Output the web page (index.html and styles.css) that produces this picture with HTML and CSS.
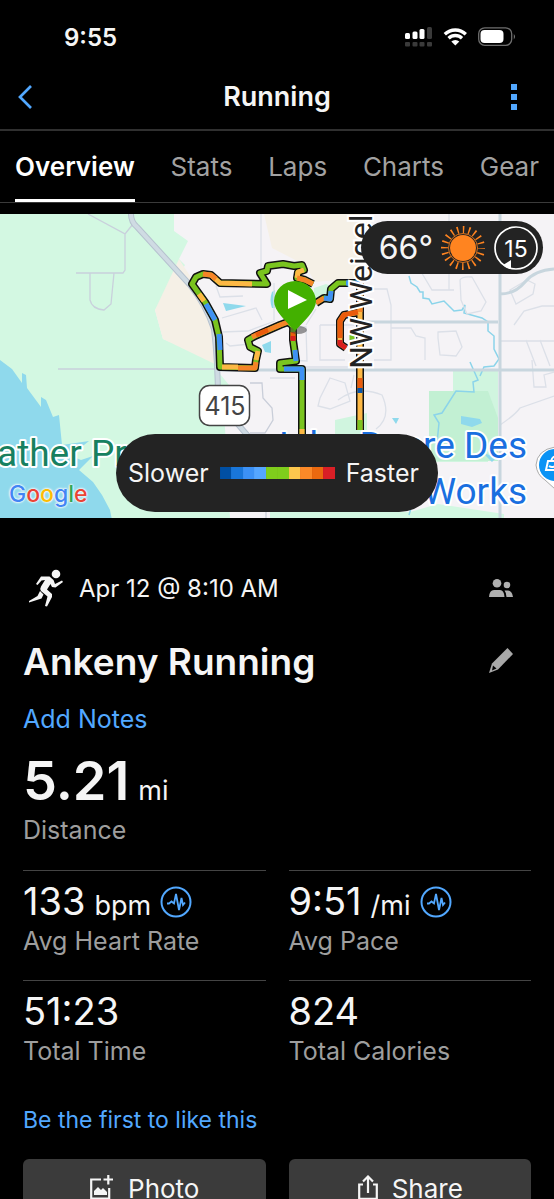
FILE: index.html
```html
<!DOCTYPE html>
<html lang="en">
<head>
  <meta charset="UTF-8">
  <title>Running | Activity</title>
  <meta name="viewport" content="width=device-width, initial-scale=1">
  <link rel="stylesheet" href="styles.css">
</head>
<body>
  <!-- Status bar -->
  <div class="status">
    <span class="time">9:55</span>
    <svg class="status-icons" width="114" height="22" viewBox="404 26 114 22">
      <g fill="#fff">
        <rect x="405" y="33" width="5" height="6" rx="1.5"/>
        <rect x="412.500" y="31.500" width="5" height="7.500" rx="1.500"/>
        <rect x="419.500" y="29" width="5" height="10" rx="1.5"/>
      </g>
      <g fill="#3a3a3a">
        <rect x="427" y="27" width="5" height="12" rx="1.5"/>
        <rect x="405" y="42" width="5" height="4.500" rx="1"/>
        <rect x="412.500" y="42" width="5" height="4.500" rx="1"/>
        <rect x="419.500" y="42" width="5" height="4.500" rx="1"/>
        <rect x="427" y="42" width="5" height="4.500" rx="1"/>
      </g>
      <g fill="none" stroke="#fff" stroke-width="3.300">
        <path d="M444.800 34.300a15 15 0 0 1 21 0"/>
        <path d="M448.600 38.200a9.600 9.600 0 0 1 13.400 0"/>
      </g>
      <path fill="#fff" d="M451.300 41.500a5.800 5.800 0 0 1 8 0l-4 4z"/>
      <rect x="478.700" y="27.800" width="33" height="17.500" rx="6" fill="none" stroke="#6e6e6e" stroke-width="1.300"/>
      <rect x="480.500" y="30" width="23" height="13" rx="4" fill="#fff"/>
      <path fill="#777" d="M513.800 34q2.400 2.500 0 5.500z"/>
    </svg>
  </div>

  <header class="nav">
    <button type="button" class="icon-btn" aria-label="Back">
      <svg width="16" height="26" viewBox="0 0 16 26"><path d="M14 2L3 13l11 11" fill="none" stroke="#52a8ff" stroke-width="2.700"/></svg>
    </button>
    <h1>Running</h1>
    <button type="button" class="icon-btn" aria-label="More">
      <svg width="6" height="26" viewBox="0 0 6 26" fill="#52a8ff"><path d="M0 0h6v6H0zM0 10h6v6H0zM0 20h6v6H0z"/></svg>
    </button>
  </header>

  <nav class="tabs">
    <a href="#overview" class="active">Overview</a>
    <a href="#stats">Stats</a>
    <a href="#laps">Laps</a>
    <a href="#charts">Charts</a>
    <a href="#gear">Gear</a>
  </nav>

  <main>
    <section class="map">
      <svg class="map-canvas" viewBox="0 214 554 304" preserveAspectRatio="xMidYMid slice">
        <defs>
          <path id="loop" d="M313 284L305 280 297 278 298 272 304 270 302 265 294 266 283 264 268 266 267 271 260 273 267 284 220 283 211 275 203 274 196 277 192 284 205 302 215 320 219 337 220 367 255 368 256 360 258 351 250 347 248 340 255 336 280 325 288 322 293 326 293 340 296 361 280 363 280 369 302 369 302 436"/>
          <path id="east" d="M316 303L324 298 330 299 331 289 338 283 360 283"/>
          <path id="weigel" d="M360 283V430M360 312L344 315 340 321 340 344 346 348"/>
        </defs>
        <rect y="214" width="554" height="304" fill="#f5f3f6"/>
        <!-- land -->
        <path fill="#d3f8e2" d="M0 214H174V231l14 10-9 18 6 6-30 45 8 29 57 23v12l18 22 15 11 24 1 10 22v88H0z"/>
        <path fill="#f5f0e6" d="M179 259l13 20 23 40 6 48-58-28-8-29z"/>
        <path fill="#f5f0e6" d="M264 214h96v64l-45 4-10-17-33-17z"/>
        <path fill="#f5f3f6" d="M222 392l28-16h50v142h-70l-5-90z"/>
        <path fill="#d0f5df" d="M453 370h45v50h-10v42h-59v-71h24zM335 420l32-7v29h-32z"/>
        <path fill="#c2f0d3" d="M429 391h59l10 27v43h-69z"/>
        <path fill="#d3f8e2" d="M270 512l60-3 80 3 28-8 66 10v4H270z"/>
        <path fill="#d0f5df" d="M314 288l12-4 10 4-4 14-18 2z"/>
        <!-- water -->
        <path fill="#8fd9ec" d="M0 360l12 9 10 14 0-10 4 2 1 13 14 19v-10l5 3 7 17 6-2 3 30 27-4-10 8-10 6 12 5 12-4-14 14 14 12 9 13 8 15 2 10H0zM223 303l23 3-20 5zM262 345l9-4v12l-6-1z"/>
        <path fill="#8fd9ec" d="M461 416l19 3 2 4-10 4-11-3zM392 418h7l-3 6zM482 452l14 6-4 4zM272 292q-3 8 0 16h3v-18z"/>
        <path fill="none" stroke="#8bd4ea" stroke-width="1.500" d="M409 276l2 7 6 4 3 5 3 0 0 6 6 1 3 5 12-3 10 10 8-1 3-5-1 8 18 5 6 4v9l6 5 0 13 5 10-5 7-10 1-4 9M470 362l8 18-5 2 1 10-18-1-14 22-8 2 5 8-2 20M412 505l-3 10"/>
        <!-- streets -->
        <g fill="none" stroke="#dce0e8" stroke-width="1.300">
          <path stroke="#c9d0dc" d="M88 214l37 20v36l-2 3H76M90 273v27q2 9 14 10l7-6 3-31M125 234l8-10M58 369h160"/>
          <path d="M261 214v69M216 286l4 11 23-1M222 318l34-10 6 12M222 332l26-1 27-10M226 343l4 3 20-2M274 283v37M300 327h6l1 34-20-1M320 325v35h25M320 325h34M306 325l10-16M354 322h140M354 367h-54M373 289h14l4 16v55h-17M391 328h20l5 8 9 2v22M438 332l18-1 6 16-6 9-16-1-2-17zM460 280q2-4 12-3l14 25-5 9-14 3-6-14zM420 270l12 20h22M449 214v76M510 290l17-10 8 4-2 10-17 10zM514 325l10-14 18-5h12M500 341h54M526 340l10 26M540 340l10 26M532 360l2 27h12l-2-12 10-3M500 425q15-10 20-17l34-12M270 378h25M354 375l-3 13M330 378l15 5 5 18-20 8-12-3 2-8zM338 400q20-15 44-5 10 22-6 34"/>
          <path stroke="#c9ced9" d="M250 383h12l1 15 9 10 1 12-8 13h-15M266 434v84"/>
        </g>
        <path fill="none" stroke="#c8d6de" stroke-width="3" d="M220 370h334M354 322h144M500 214v304M500 294q15 0 25-12 10-12 29-13"/>
        <path fill="none" stroke="#b6c2cf" stroke-width="6" d="M131 214q0 8 6 13l53 58q16 20 24 44 4 34 4 72l30 35"/>
        <path fill="none" stroke="#cfdbe3" stroke-width="4" d="M131 214q0 8 6 13l53 58q16 20 24 44 4 34 4 72l30 35"/>

        <!-- place labels -->
        <g class="place">
          <text class="park" x="-3" y="466">ather Pr</text>
          <text x="527" y="458" text-anchor="end">John Deere Des</text>
          <text x="527" y="504" text-anchor="end">Works</text>
        </g>

        <!-- route: dark casing, then speed colours -->
        <g class="casing">
          <use href="#loop"/>
          <use href="#east"/>
          <use href="#weigel"/>
        </g>
        <g class="track">
          <use href="#loop" stroke="#7ac41f"/>
          <use href="#east" stroke="#7ac41f"/>
          <use href="#weigel" stroke="#fdb844"/>
          <path stroke="#fdb844" d="M252 284L220 283 211 275M304 270L298 272 297 278M199 294L204 301M222 367H238M256 360L258 351M302 429V436"/>
          <path stroke="#f58427" d="M203 274L211 275 216 279M238 368H255L256 362M252 337L280 325 288 322M316 303L324 298M297 278L305 280 313 284M360 295V312"/>
          <path stroke="#3f91f4" d="M206 304L215 320M219 334L220 350M295 350L296 361M284 369H302V380M324 298L330 299 331 291M346 283H360"/>
          <path stroke="#ea5b0c" d="M358 312L344 315 340 321V338M293 332V340M256 335L268 330M360 378V388"/>
          <path stroke="#d91e1e" d="M293 336V341M340 340V344L346 348"/>
          <path stroke="#0b55a8" d="M360 388V393"/>
          <path stroke="#7ac41f" d="M352 333V345M360 420V430"/>
        </g>

        <text class="road" transform="translate(372 369) rotate(-90)">NW Weigel</text>

        <ellipse cx="298" cy="330" rx="9" ry="4" fill="#333" opacity=".5"/>
        <path fill="#43b000" d="M295 281a21 21 0 0 1 21 20c0 10-12 20-21 30-9-10-21-20-21-30a21 21 0 0 1 21-20z"/>
        <path fill="#fff" d="M288 290l19 10-19 9z"/>

        <rect x="199.500" y="385.500" width="50" height="40" rx="10" fill="#fff" stroke="#444" stroke-width="1.500"/>
        <text class="shield" x="225" y="415" text-anchor="middle">415</text>

        <!-- store pin at the edge -->
        <path fill="#fff" stroke="#aaa" d="M555 447q-18 3-19 18 1 10 9 15l10 9z"/>
        <circle cx="555" cy="465" r="16" fill="#0a93f5"/>
        <path fill="none" stroke="#fff" stroke-width="2" d="M548 461h10v9h-12zM551 461q2-6 6-4M549 466q3 2 6 0"/>
      </svg>

      <div class="google"><span class="g-blue">G</span><span class="g-red">o</span><span class="g-yellow">o</span><span class="g-blue">g</span><span class="g-green">l</span><span class="g-red">e</span></div>

      <div class="weather">
        <span>66°</span>
        <svg width="46" height="46" viewBox="-23 -23 46 46">
          <circle r="13" fill="#ff8420"/>
          <circle r="14.500" fill="none" stroke="#ff8420" stroke-width=".8"/>
          <circle r="18.500" fill="none" stroke="#ff8420" stroke-width="7" stroke-dasharray="1.500 4.312" stroke-dashoffset=".75"/>
        </svg>
        <svg width="46" height="46" viewBox="-23 -23 46 46">
          <circle r="21" fill="none" stroke="#fff" stroke-width="1.700"/>
          <path fill="#fff" d="M-5 12l-8 5q4 4 8 4z"/>
          <text class="wind" y="9" text-anchor="middle">15</text>
        </svg>
      </div>

      <div class="legend">
        <span>Slower</span>
        <div class="scale">
          <i class="s1"></i><i class="s2"></i><i class="s3"></i><i class="s4"></i><i class="s5"></i><i class="s5"></i><i class="s6"></i><i class="s7"></i><i class="s8"></i><i class="s9"></i>
        </div>
        <span>Faster</span>
      </div>
    </section>

    <section class="details">
      <div class="row date-row">
        <svg width="36" height="38" viewBox="0 0 36 38">
          <circle cx="28" cy="5" r="4.300" fill="#f5f5f5"/>
          <path fill="#f5f5f5" d="M13 7.500h8.500l4 3.500 1.500 4 7-3.500 1 1.500-7.500 5.500-3.500-.5-1.500-3-3.500 5.500 5 4.500v3l-5 9.500-2-.5 2.500-9.500-6.500-5.500q-1.500-2 0-4.500l4-6.500-3.500.5-4 4.500-1.500-1z"/>
          <path fill="#f5f5f5" d="M12 22l3.500 3.500-2 4L1 33.500l0-1.500 8.500-5z"/>
        </svg>
        <span class="date">Apr 12 @ 8:10 AM</span>
        <button type="button" class="icon-btn push" aria-label="Privacy">
          <svg width="24" height="18" viewBox="0 0 24 18" fill="#b0b0b0"><circle cx="8" cy="4.300" r="4.300"/><circle cx="18" cy="6" r="3.300"/><path d="M0 18q.5-7 5-7h6q4 0 4.500 7zM15.500 11.500h3.500q4 0 5 6.500h-6.500q0-4-2-6.500z"/></svg>
        </button>
      </div>

      <div class="row title-row">
        <h2>Ankeny Running</h2>
        <button type="button" class="icon-btn push" aria-label="Edit name">
          <svg width="24" height="26" viewBox="0 0 24 26"><path fill="#a8a8a8" d="M18.500 0L24 6 9 21.500 0 25l3-9.500z"/><path fill="#000" d="M4 17.500l3.500 3-4.500 2z"/></svg>
        </button>
      </div>

      <a href="#notes" class="notes">Add Notes</a>

      <div class="stat total">
        <div class="value">5.21 <small>mi</small></div>
        <div class="label">Distance</div>
      </div>

      <div class="stats">
        <div class="stat">
          <div class="value">133 <small>bpm</small>
            <svg width="32" height="32" viewBox="0 0 32 32" fill="none" stroke="#52a8ff"><circle cx="16" cy="16" r="14.500" stroke-width="2"/><path stroke-width="1.800" d="M7 17.500h2l2.500-2 2.500 2L16 8l3 16 2.500-12 1.500 7 2-2.500"/></svg>
          </div>
          <div class="label">Avg Heart Rate</div>
        </div>
        <div class="stat">
          <div class="value">9:51 <small>/mi</small>
            <svg width="32" height="32" viewBox="0 0 32 32" fill="none" stroke="#52a8ff"><circle cx="16" cy="16" r="14.500" stroke-width="2"/><path stroke-width="1.800" d="M7 17.500h2l2.500-2 2.500 2L16 8l3 16 2.500-12 1.500 7 2-2.500"/></svg>
          </div>
          <div class="label">Avg Pace</div>
        </div>
        <div class="stat">
          <div class="value">51:23</div>
          <div class="label">Total Time</div>
        </div>
        <div class="stat">
          <div class="value">824</div>
          <div class="label">Total Calories</div>
        </div>
      </div>

      <a href="#like" class="like">Be the first to like this</a>

      <div class="actions">
        <button type="button">
          <svg width="26" height="26" viewBox="0 0 26 26" fill="none" stroke="#f5f5f5" stroke-width="2.200"><path d="M12 4.500H2.200v19h18V13M14.500 4.500h9.500M19.300 0v9.500"/><path fill="#f5f5f5" stroke="none" d="M5 20v-4l4-4 3 3 2-2 4 4v3z"/></svg>
          Photo
        </button>
        <button type="button">
          <svg width="22" height="26" viewBox="0 0 22 26" fill="none" stroke="#f5f5f5" stroke-width="2.200"><path d="M6 9.500H2.200v14.300h17.600V9.500H16M11 18V2M6 6.500l5-5 5 5"/></svg>
          Share
        </button>
      </div>
    </section>
  </main>
</body>
</html>
```

FILE: styles.css
```css
* {
  box-sizing: border-box;
}
body {
  margin: 0;
  height: 100vh;
  overflow: hidden;
  display: flex;
  flex-direction: column;
  background: #000;
  color: #f5f5f5;
  font-family: Inter, Roboto, sans-serif;
}
a {
  color: #52a8ff;
  text-decoration: none;
}
button {
  border: none;
  color: inherit;
  font-family: inherit;
  cursor: pointer;
}
svg {
  display: block;
  flex: none;
}
.status {
  flex: none;
  height: 64px;
  padding: 10px 36px 0 64px;
  display: flex;
  align-items: center;
  justify-content: space-between;
}
.time {
  font-size: 24px;
  font-weight: 600;
}
.nav {
  flex: none;
  height: 67px;
  padding: 0 37px 0 17px;
  display: grid;
  grid-template-columns: 16px 1fr 6px;
  align-items: center;
  border-bottom: 2px solid #303030;
}
.nav h1 {
  margin: 0;
  padding-left: 10px;
  text-align: center;
  font-size: 27px;
  font-weight: 600;
}
.icon-btn {
  background: none;
  padding: 0;
}
.tabs {
  flex: none;
  height: 72px;
  padding: 0 15px;
  display: flex;
  justify-content: space-between;
  border-bottom: 1px solid #3a3a3a;
}
.tabs a {
  color: #a2a2a2;
  font-size: 26px;
  line-height: 71px;
}
.tabs .active {
  color: #fff;
  font-weight: 600;
  border-bottom: 3px solid #fff;
}
main {
  flex: 1;
  min-height: 0;
  overflow-y: auto;
  scrollbar-width: none;
  padding-top: 11px;
}

/* Map */
.map {
  position: relative;
  height: 304px;
  overflow: hidden;
}
.map-canvas {
  width: 100%;
  height: 100%;
}
.place {
  font-family: Roboto, sans-serif;
  font-size: 37px;
  fill: #1a6fe0;
  stroke: #fff;
  stroke-width: 4px;
  paint-order: stroke;
  stroke-linejoin: round;
}
.park {
  fill: #178060;
}
.casing, .track {
  fill: none;
  stroke-linejoin: round;
}
.casing {
  stroke: #111;
  stroke-width: 8px;
}
.track {
  stroke-width: 5px;
}
.road {
  font-family: Roboto, sans-serif;
  font-size: 32px;
  fill: #222;
  stroke: #fff;
  stroke-width: 4px;
  paint-order: stroke;
}
.shield {
  font-size: 25px;
  fill: #444;
}
.google {
  position: absolute;
  left: 9px;
  bottom: 8px;
  font-size: 23px;
  line-height: 32px;
  font-weight: 500;
  text-shadow: 0 0 2px #fff, 0 0 2px #fff, 0 0 3px #fff;
}
.g-blue { color: #4285f4; }
.g-red { color: #ea4335; }
.g-yellow { color: #fbbc05; }
.g-green { color: #34a853; }
.weather {
  position: absolute;
  top: 7px;
  right: 11px;
  height: 53px;
  padding: 0 4px 0 18px;
  display: flex;
  align-items: center;
  gap: 7px;
  border-radius: 27px;
  background: #232323;
  font-size: 32px;
}
.wind {
  font-size: 23px;
  fill: #fff;
}
.legend {
  position: absolute;
  left: 50%;
  bottom: 6px;
  transform: translateX(-50%);
  height: 78px;
  padding: 0 19px 0 12px;
  display: flex;
  align-items: center;
  gap: 11px;
  border-radius: 39px;
  background: #232323;
  font-size: 25px;
}
.scale {
  width: 115px;
  display: flex;
}
.scale i {
  flex: 1;
  height: 12px;
}
.scale .s1 { background: #004fa3; }
.scale .s2 { background: #1976d9; }
.scale .s3 { background: #3c91f5; }
.scale .s4 { background: #55a6ff; }
.scale .s5 { background: #7fcd1c; }
.scale .s6 { background: #fdc74d; }
.scale .s7 { background: #fb8928; }
.scale .s8 { background: #eb690f; }
.scale .s9 { background: #d91f26; }

/* Activity details */
.details {
  padding: 48px 23px 20px;
  display: flex;
  flex-direction: column;
}
.row {
  display: flex;
  align-items: center;
}
.push {
  margin-left: auto;
  margin-right: 18px;
}
.date-row {
  height: 44px;
  padding-left: 5px;
  gap: 15px;
}
.date {
  font-size: 24px;
}
.title-row {
  height: 60px;
  margin-top: 21px;
}
.title-row h2 {
  margin: 0;
  font-size: 37px;
  font-weight: 600;
}
.notes {
  margin-top: 12px;
  font-size: 25px;
  line-height: 32px;
}
.value {
  display: flex;
  align-items: baseline;
  gap: 9px;
  height: 46px;
  font-size: 38px;
  line-height: 44px;
}
.value small {
  font-size: 27px;
  line-height: 32px;
}
.value svg {
  align-self: center;
}
.label {
  color: #9e9e9e;
  font-size: 25px;
  line-height: 32px;
}
.total .value {
  height: 66px;
  margin-top: 13px;
  font-size: 54px;
  font-weight: 600;
  line-height: 66px;
}
.total .value small {
  font-weight: 400;
}
.stats {
  margin-top: 24px;
  display: grid;
  grid-template-columns: 1fr 1fr;
  column-gap: 23px;
}
.stats .stat {
  height: 110px;
  padding-top: 8px;
  border-top: 1px solid #444;
}
.like {
  margin-top: 14px;
  font-size: 23px;
  line-height: 32px;
}
.actions {
  margin-top: 23px;
  display: grid;
  grid-template-columns: 1fr 1fr;
  column-gap: 23px;
}
.actions button {
  height: 58px;
  display: flex;
  align-items: center;
  justify-content: center;
  gap: 13px;
  border-radius: 6px;
  background: #3b3b3b;
  font-size: 26px;
}
```
